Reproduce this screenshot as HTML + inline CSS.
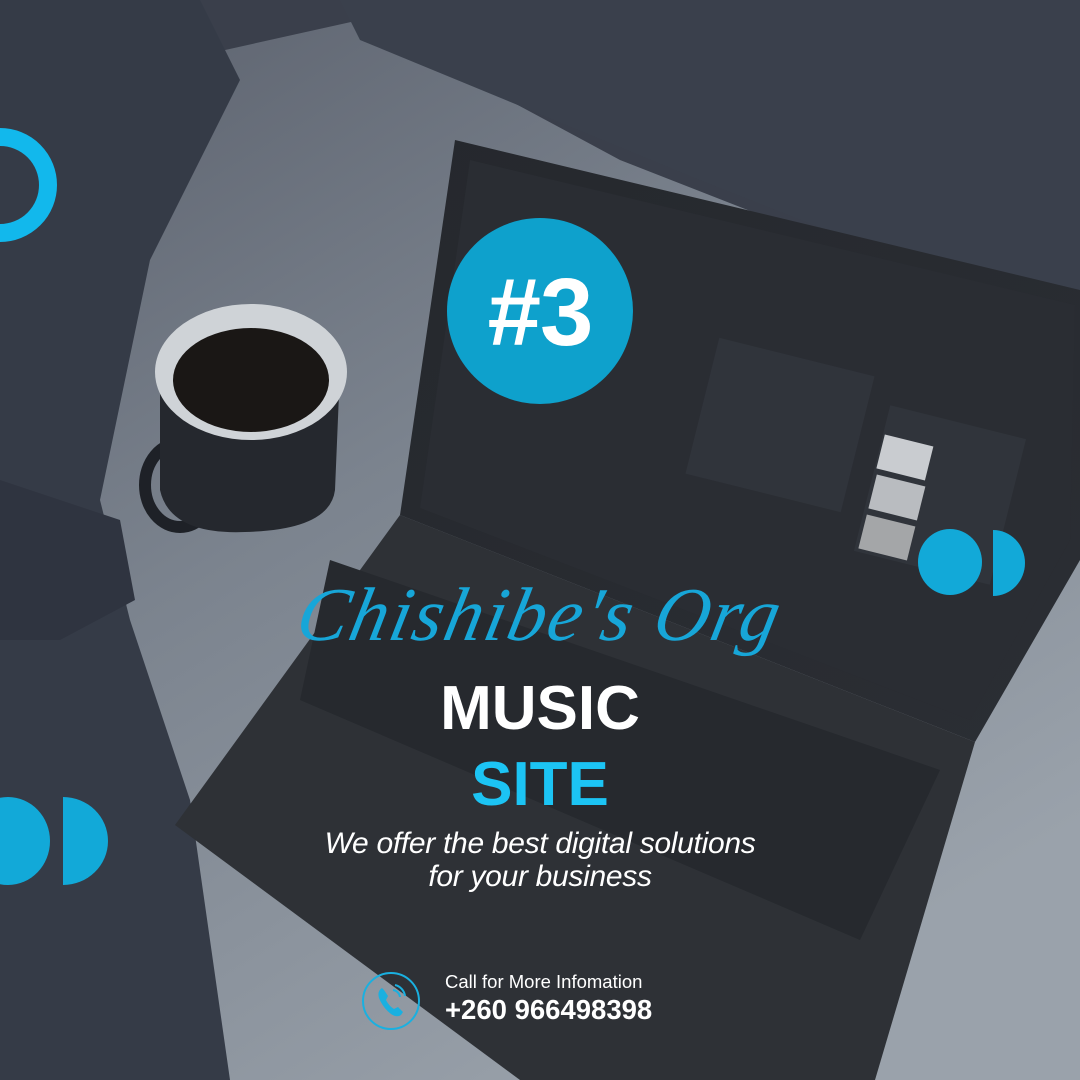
<!DOCTYPE html>
<html><head><meta charset="utf-8">
<style>
html,body{margin:0;padding:0}
body{width:1080px;height:1080px;position:relative;overflow:hidden;background:#3b404b;font-family:"Liberation Sans",sans-serif}
svg.bg{position:absolute;left:0;top:0}
.t{position:absolute;left:0;width:1080px;text-align:center;color:#fff}
</style></head><body>
<svg class="bg" width="1080" height="1080" viewBox="0 0 1080 1080">
<defs>
<linearGradient id="sheet" x1="0" y1="0" x2="0.6" y2="1">
<stop offset="0" stop-color="#5c626e"/><stop offset="0.45" stop-color="#7b838e"/><stop offset="1" stop-color="#9aa2ab"/>
</linearGradient>
<linearGradient id="scr" x1="0" y1="0" x2="1" y2="1">
<stop offset="0" stop-color="#25282d"/><stop offset="1" stop-color="#2b2e34"/>
</linearGradient>
</defs>
<rect width="1080" height="1080" fill="#3a3f4b"/>
<path d="M180 60 L360 20 L620 160 L1080 340 L1080 1080 L150 1080 L80 700 L40 420 Z" fill="url(#sheet)"/>
<path d="M340 0 L1080 0 L1080 330 L700 180 L360 40 Z" fill="#3a404c"/>
<path d="M0 0 L200 0 L240 80 L150 260 L100 500 L130 620 L190 800 L230 1080 L0 1080 Z" fill="#353b47"/>
<path d="M0 480 L120 520 L135 600 L60 640 L0 640 Z" fill="#2f3440"/>
<path d="M400 515 L975 742 L875 1080 L520 1080 L175 825 Z" fill="#2e3136"/>
<path d="M330 560 L940 770 L860 940 L300 700 Z" fill="#26292e"/>
<path d="M455 140 L1080 290 L1080 560 L975 742 L400 515 Z" fill="url(#scr)"/>
<path d="M470 160 L1075 305 L1070 540 L970 720 L420 508 Z" fill="#2a2d33"/>
<rect x="700" y="355" width="160" height="140" fill="#30343b" transform="rotate(14 780 425)"/>
<rect x="870" y="420" width="140" height="150" fill="#30343b" transform="rotate(14 940 495)"/>
<rect x="880" y="440" width="50" height="35" fill="#c9ccd0" transform="rotate(14 905 457)"/>
<rect x="872" y="480" width="50" height="35" fill="#b9bcc0" transform="rotate(14 897 497)"/>
<rect x="862" y="520" width="50" height="35" fill="#a4a6a8" transform="rotate(14 887 537)"/>
<ellipse cx="180" cy="485" rx="35" ry="42" fill="none" stroke="#1e2127" stroke-width="12"/>
<path d="M160 370 L160 490 Q170 535 245 532 Q330 530 335 490 L340 370 Z" fill="#25282e"/>
<ellipse cx="251" cy="372" rx="96" ry="68" fill="#cfd3d7"/>
<ellipse cx="251" cy="380" rx="78" ry="52" fill="#1a1715"/>
<circle cx="0" cy="185" r="48" fill="none" stroke="#12b8ec" stroke-width="18"/>
<ellipse cx="8" cy="841" rx="42" ry="44" fill="#12a9d8"/>
<path d="M63 797 A45 44 0 0 1 63 885 Z" fill="#12a9d8"/>
<ellipse cx="950" cy="562" rx="32" ry="33" fill="#12a9d8"/>
<path d="M993 530 A32 33 0 0 1 993 596 Z" fill="#12a9d8"/>
<circle cx="540" cy="311" r="93" fill="#0ea1cc"/>
<circle cx="391" cy="1001" r="28" fill="none" stroke="#1ab0e0" stroke-width="2"/>
<path d="M382 988 q-5 3 -3 10 q4 10 12 16 q6 4 10 1 l2 -3 l-5 -5 l-4 2 q-5 -3 -8 -9 l2 -4 l-4 -6 z" fill="#1ab0e0"/>
<path d="M393 990 a8 8 0 0 1 7 7 M395 985 a13 13 0 0 1 10 11" fill="none" stroke="#1ab0e0" stroke-width="2"/>
</svg>
<div class="t" style="top:258px;font-size:96px;font-weight:bold;line-height:110px;letter-spacing:-1px">#3</div>
<div class="t" style="top:570px;font-family:'Liberation Serif',serif;font-style:italic;font-size:76px;line-height:90px;color:#17a6d8;transform:skewX(-12deg);letter-spacing:2px">Chishibe's Org</div>
<div class="t" style="top:674px;font-size:62px;font-weight:bold;line-height:70px">MUSIC</div>
<div class="t" style="top:750px;font-size:62px;font-weight:bold;line-height:70px;color:#1cc4f4">SITE</div>
<div class="t" style="top:827px;font-size:30px;font-style:italic;line-height:33px;letter-spacing:-0.3px">We offer the best digital solutions<br>for your business</div>
<div style="position:absolute;left:445px;top:971px;color:#fff;font-size:18.5px">Call for More Infomation</div>
<div style="position:absolute;left:445px;top:994px;color:#fff;font-size:27.5px;font-weight:bold">+260 966498398</div>
</body></html>
